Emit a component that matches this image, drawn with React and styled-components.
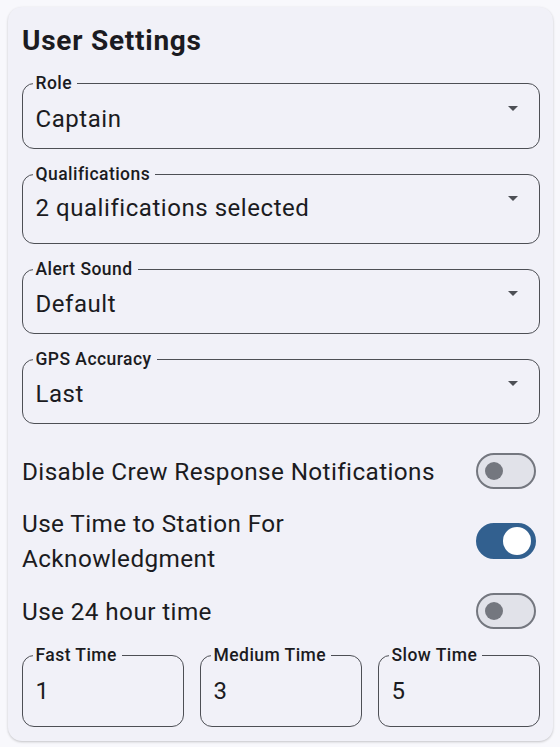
import React from 'react'
import styled, { createGlobalStyle } from 'styled-components'

const GlobalStyle = createGlobalStyle`
  html, body {
    margin: 0;
    padding: 0;
    background: #f8f8fc;
    font-family: Roboto, "Liberation Sans", sans-serif;
    color: #1b1b21;
  }
`

const Card = styled.div`
  margin: 7px 7px 6px 8px;
  height: 734px;
  box-sizing: border-box;
  padding: 18px 13px 14px 14px;
  background: #f1f1f8;
  border-radius: 14px;
  box-shadow: 0 1px 3px rgba(0, 0, 0, 0.14), 0 1px 2px rgba(0, 0, 0, 0.08);
  display: flex;
  flex-direction: column;
`

const Title = styled.h2`
  margin: 0 0 16px;
  font-size: 28px;
  line-height: 32px;
  font-weight: 700;
  letter-spacing: 0.75px;
`

const Fields = styled.div`
  display: flex;
  flex-direction: column;
  gap: 15px;
`

const Outline = styled.fieldset`
  margin: 0;
  min-width: 0;
  box-sizing: border-box;
  height: ${(p) => p.$height}px;
  padding: 0 14px 0 12.5px;
  border: 1.5px solid #4d4f55;
  border-radius: 12px;
  display: flex;
  flex-direction: column;
`

const Legend = styled.legend`
  padding: 0 5px 0 3px;
  margin-left: -3px;
  font-size: 17.5px;
  line-height: 20px;
  font-weight: 500;
  letter-spacing: 0.45px;
  color: #1b1b21;
`

const FieldBody = styled.div`
  flex: 1;
  margin-top: -10px;
  display: flex;
  justify-content: space-between;
  align-items: center;
`

const Value = styled.span`
  align-self: flex-start;
  padding-top: ${(p) => p.$top || 21}px;
  font-size: 24px;
  line-height: 28px;
  letter-spacing: 0.55px;
  color: #1b1b21;
`

const Caret = styled.span`
  width: 0;
  height: 0;
  margin-right: 7px;
  border-left: 5.5px solid transparent;
  border-right: 5.5px solid transparent;
  border-top: 5.5px solid #4d4f55;
`

const Toggles = styled.div`
  margin-top: 29px;
  display: flex;
  flex-direction: column;
  gap: 17px;
`

const ToggleRow = styled.div`
  display: flex;
  align-items: center;
  justify-content: space-between;
  min-height: 36px;
`

const ToggleText = styled.span`
  font-size: 24.3px;
  line-height: 35px;
  letter-spacing: 0.4px;
  max-width: 430px;
`

const Track = styled.span`
  flex: none;
  width: 60px;
  height: 36px;
  box-sizing: border-box;
  margin-right: 4px;
  border-radius: 18px;
  border: 2.3px solid ${(p) => (p.$on ? '#32608f' : '#74777f')};
  background: ${(p) => (p.$on ? '#32608f' : '#e1e2e9')};
  display: flex;
  align-items: center;
  justify-content: ${(p) => (p.$on ? 'flex-end' : 'flex-start')};
  padding: 0 ${(p) => (p.$on ? '3px' : '0')} 0 ${(p) => (p.$on ? '0' : '6.7px')};
`

const Thumb = styled.span`
  width: ${(p) => (p.$on ? 28 : 18)}px;
  height: ${(p) => (p.$on ? 28 : 18)}px;
  border-radius: 50%;
  background: ${(p) => (p.$on ? '#ffffff' : '#74777f')};
`

const Times = styled.div`
  margin-top: 16px;
  display: grid;
  grid-template-columns: repeat(3, 1fr);
  gap: 16px;
`

const Select = ({ label, value, height, top }) => (
  <Outline $height={height}>
    <Legend>{label}</Legend>
    <FieldBody>
      <Value $top={top}>{value}</Value>
      <Caret />
    </FieldBody>
  </Outline>
)

const NumberField = ({ label, value }) => (
  <Outline $height={82}>
    <Legend>{label}</Legend>
    <FieldBody>
      <Value $top={22}>{value}</Value>
    </FieldBody>
  </Outline>
)

const Toggle = ({ text, on }) => (
  <ToggleRow>
    <ToggleText>{text}</ToggleText>
    <Track $on={on}>
      <Thumb $on={on} />
    </Track>
  </ToggleRow>
)

export default function App() {
  return (
    <>
      <GlobalStyle />
      <Card>
        <Title>User Settings</Title>
        <Fields>
          <Select label="Role" value="Captain" height={76} top={22} />
          <Select label="Qualifications" value="2 qualifications selected" height={80} top={20} />
          <Select label="Alert Sound" value="Default" height={75} />
          <Select label="GPS Accuracy" value="Last" height={75} />
        </Fields>
        <Toggles>
          <Toggle text="Disable Crew Response Notifications" on={false} />
          <Toggle text="Use Time to Station For Acknowledgment" on />
          <Toggle text="Use 24 hour time" on={false} />
        </Toggles>
        <Times>
          <NumberField label="Fast Time" value="1" />
          <NumberField label="Medium Time" value="3" />
          <NumberField label="Slow Time" value="5" />
        </Times>
      </Card>
    </>
  )
}
